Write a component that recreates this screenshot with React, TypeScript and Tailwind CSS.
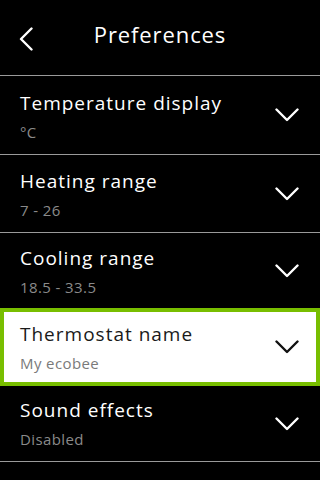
import React from 'react';

type Pref = { id: string; title: string; value: string; height: string; pad: string; selected?: boolean; divider?: boolean };

const prefs: Pref[] = [
    { id: 'temp', title: 'Temperature display', value: '°C', height: 'h-[78px]', pad: 'pt-[15px]', divider: true },
    { id: 'heat', title: 'Heating range', value: '7 - 26', height: 'h-[77px]', pad: 'pt-[14px]', divider: true },
    { id: 'cool', title: 'Cooling range', value: '18.5 - 33.5', height: 'h-[75px]', pad: 'pt-[13px]' },
    { id: 'name', title: 'Thermostat name', value: 'My ecobee', height: 'h-[78px]', pad: 'pt-[10px]', selected: true },
    { id: 'sound', title: 'Sound effects', value: 'Disabled', height: 'h-[75px]', pad: 'pt-[12px]', divider: true },
];

const ChevronDown: React.FC<{ color: string }> = ({ color }) => (
    <svg width="24" height="14" viewBox="0 0 24 14" fill="none">
        <polyline points="1.5,1.5 12,12 22.5,1.5" stroke={color} strokeWidth="2.4" strokeLinecap="round" strokeLinejoin="round" />
    </svg>
);

const App: React.FC = () => {
    return (
        <div className="w-[320px] h-[480px] bg-black overflow-hidden font-['Open_Sans',sans-serif]">
            <header className="h-[75px] grid grid-cols-[1fr_auto_1fr] border-b border-[#9a9a9a] box-content">
                <button className="self-center justify-self-start pl-[19px] pt-[2px]" aria-label="Back">
                    <svg width="14" height="24" viewBox="0 0 14 24" fill="none">
                        <polyline points="12.5,1.5 2,12 12.5,22.5" stroke="white" strokeWidth="2.4" strokeLinecap="round" strokeLinejoin="round" />
                    </svg>
                </button>
                <h1 className="pt-[20px] text-[22px] leading-[28px] text-white tracking-[0.9px]">Preferences</h1>
                <div />
            </header>
            {prefs.map(p => (
                <div
                    key={p.id}
                    className={
                        p.selected
                            ? `${p.height} bg-white border-4 border-[#78be00] flex items-center justify-between pl-[16px] pr-[17px]`
                            : `${p.height} ${p.divider ? 'border-b border-[#9a9a9a] box-content' : ''} flex items-center justify-between pl-[20px] pr-[21px]`
                    }
                >
                    <div className={`self-start ${p.pad}`}>
                        <p className={`text-[19px] leading-[24px] tracking-[1px] ${p.selected ? 'text-[#1a1a1a]' : 'text-white'}`}>{p.title}</p>
                        <p className={`mt-[7px] text-[15px] leading-[20px] tracking-[0.4px] ${p.selected ? 'text-[#7a7a7a]' : 'text-[#8a8a8a]'}`}>{p.value}</p>
                    </div>
                    <ChevronDown color={p.selected ? '#111' : 'white'} />
                </div>
            ))}
        </div>
    );
};

export default App;
